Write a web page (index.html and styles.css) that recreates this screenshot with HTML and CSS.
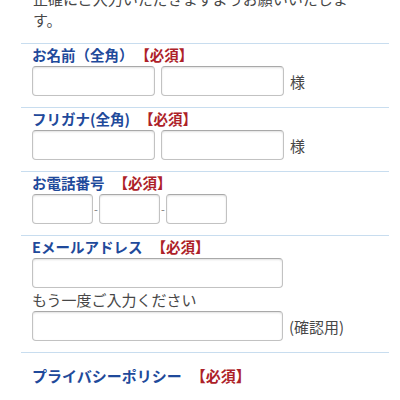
FILE: index.html
```html
<!DOCTYPE html>
<html lang="ja">
<head>
    <meta charset="UTF-8">
    <meta name="viewport" content="width=device-width, initial-scale=1.0">
    <title>お問い合わせフォーム</title>
    <link rel="stylesheet" href="styles.css">
</head>
<body>
    <div class="form">
        <p class="intro">正確にご入力いただきますようお願いいたします。</p>

        <div class="row">
            <div class="label">お名前（全角）<span class="req">【必須】</span></div>
            <div class="fields">
                <input type="text" class="box">
                <input type="text" class="box">
                <span class="suffix">様</span>
            </div>
        </div>

        <div class="row">
            <div class="label">フリガナ(全角)<span class="req">【必須】</span></div>
            <div class="fields">
                <input type="text" class="box">
                <input type="text" class="box">
                <span class="suffix">様</span>
            </div>
        </div>

        <div class="row">
            <div class="label">お電話番号<span class="req">【必須】</span></div>
            <div class="fields tel">
                <input type="tel" class="box small">
                <span class="dash">-</span>
                <input type="tel" class="box small">
                <span class="dash">-</span>
                <input type="tel" class="box small">
            </div>
        </div>

        <div class="row">
            <div class="label">Eメールアドレス<span class="req">【必須】</span></div>
            <div class="fields">
                <input type="email" class="box wide">
            </div>
            <div class="note">もう一度ご入力ください</div>
            <div class="fields">
                <input type="email" class="box wide">
                <span class="suffix">(確認用)</span>
            </div>
        </div>

        <div class="row privacy">
            <div class="label">プライバシーポリシー<span class="req">【必須】</span></div>
            <p class="policy">同意</p>
        </div>
    </div>
</body>
</html>
```

FILE: styles.css
```css
body {
    margin: 0;
    font-family: "Noto Sans CJK JP", "Noto Sans", sans-serif;
    color: #474747;
    background: #fff;
    overflow: hidden;
}
.form {
    margin: 0 11px 0 21px;
}
.intro {
    margin: -12px 0 0;
    padding: 0 0 13px 12px;
    width: 325px;
    font-size: 15px;
    line-height: 21px;
}
.row {
    border-top: 1px solid #c8ddef;
    padding: 0 11px 11px;
}
.label {
    font-size: 14.5px;
    font-weight: bold;
    line-height: 22px;
    color: #1f4a9b;
}
.req {
    color: #ad2128;
    margin-left: 9px;
}
.fields {
    display: flex;
    align-items: center;
    gap: 6px;
}
.box {
    box-sizing: border-box;
    width: 123px;
    height: 30px;
    margin: 0;
    padding: 0 6px;
    border: 1px solid #c2c2c2;
    border-top-color: #a9a9a9;
    border-radius: 4px;
    background: #fff;
    box-shadow: inset 0 1px 2px rgba(0, 0, 0, 0.12);
    font-size: 15px;
}
.box.wide {
    width: 251px;
}
.tel {
    gap: 0;
}
.box.small {
    width: 61px;
}
.dash {
    width: 6px;
    text-align: center;
    font-size: 11px;
    color: #777;
}
.suffix {
    font-size: 15px;
}
.note {
    font-size: 15px;
    line-height: 23px;
}
.privacy {
    padding-top: 12px;
}
.privacy .label {
    font-size: 15px;
}
.policy {
    margin: 8px 0 0;
    font-size: 14px;
    line-height: 22px;
    color: #ccc;
}
```
